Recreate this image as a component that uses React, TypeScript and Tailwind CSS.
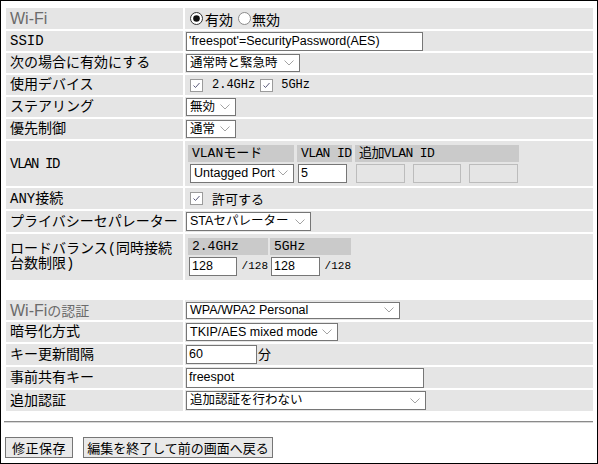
import React from "react";

const lbl = "font-['Liberation_Mono','Noto_Sans_CJK_JP',monospace] text-[14px] leading-none text-black";
const ui = "font-['Liberation_Sans','Noto_Sans_CJK_JP',sans-serif] text-[12.5px] leading-none text-black";

function Chevron() {
  return (
    <svg width="10" height="6" viewBox="0 0 10 6" className="shrink-0">
      <polyline points="0.5,0.5 5,5 9.5,0.5" fill="none" stroke="#a3a3a3" strokeWidth="1" />
    </svg>
  );
}

function Sel({ text, className }) {
  return (
    <div className={`flex items-center justify-between border border-[#767676] bg-white pl-[3px] pr-[5px] ${ui} ${className}`}>
      <span className="whitespace-nowrap">{text}</span>
      <Chevron />
    </div>
  );
}

function Inp({ text = "", className, disabled = false }) {
  return (
    <div
      className={`flex items-center pl-[2px] ${ui} ${
        disabled ? "border border-[#bcbcbc] bg-[#e5e5e5]" : "border border-[#767676] bg-white"
      } ${className}`}
    >
      <span className="whitespace-nowrap">{text}</span>
    </div>
  );
}

function Check() {
  return (
    <svg width="13" height="13" viewBox="0 0 13 13" className="shrink-0">
      <rect x="0.5" y="0.5" width="12" height="12" fill="#fff" stroke="#9b9b9b" />
      <polyline points="3.5,6.5 5.5,8.5 9.5,4" fill="none" stroke="#5a5a7a" strokeWidth="1" />
    </svg>
  );
}

function Radio({ on }) {
  return (
    <svg width="13" height="13" viewBox="0 0 13 13" className="shrink-0">
      <circle cx="6.5" cy="6.5" r="6" fill="#fff" stroke={on ? "#333" : "#8a8a8a"} />
      {on && <circle cx="6.5" cy="6.5" r="3.3" fill="#111" />}
    </svg>
  );
}

function Row({ label, h, children }) {
  return (
    <div className={`flex gap-[2px] ${h}`}>
      <div className="flex w-[177px] shrink-0 items-center bg-[#e5e5e5] pl-[4px]">{label}</div>
      <div className="flex flex-1 items-center bg-[#e5e5e5] pl-[1px]">{children}</div>
    </div>
  );
}

const head = "flex h-[17px] items-center bg-[#cacaca] pl-[4px] font-['Liberation_Mono','Noto_Sans_CJK_JP',monospace] text-[13px] leading-none";

export default function App() {
  return (
    <div className="flex h-[464px] w-[598px] flex-col border border-black bg-white pl-[3px] pr-[4px] pt-[7px]">
      <div className="ml-[2px] flex flex-col gap-[2px]">
        <Row
          h="h-[21px]"
          label={<span className="font-['Liberation_Sans',sans-serif] text-[16px] leading-none text-[#6b6b6b]">Wi-Fi</span>}
        >
          <div className="flex items-center pl-[4px] font-['Noto_Sans_CJK_JP',sans-serif] text-[14px] leading-none">
            <Radio on />
            <span className="ml-[2px]">有効</span>
            <span className="ml-[5px]"><Radio on={false} /></span>
            <span className="ml-[1px]">無効</span>
          </div>
        </Row>
        <Row h="h-[20px]" label={<span className={lbl}>SSID</span>}>
          <Inp text="'freespot'=SecurityPassword(AES)" className="h-[19px] w-[237px]" />
        </Row>
        <Row h="h-[20px]" label={<span className={lbl}>次の場合に有効にする</span>}>
          <Sel text="通常時と緊急時" className="h-[18px] w-[114px]" />
        </Row>
        <Row h="h-[20px]" label={<span className={lbl}>使用デバイス</span>}>
          <div className="flex items-center pl-[4px] font-['Liberation_Mono',monospace] text-[12px] leading-none">
            <Check />
            <span className="ml-[9px]">2.4GHz</span>
            <span className="ml-[5px]"><Check /></span>
            <span className="ml-[8px]">5GHz</span>
          </div>
        </Row>
        <Row h="h-[20px]" label={<span className={lbl}>ステアリング</span>}>
          <Sel text="無効" className="h-[18px] w-[50px]" />
        </Row>
        <Row h="h-[20px]" label={<span className={lbl}>優先制御</span>}>
          <Sel text="通常" className="h-[18px] w-[50px]" />
        </Row>
        <Row h="h-[45px]" label={<span className={`${lbl} tracking-[-1.4px]`}>VLAN ID</span>}>
          <div className="flex flex-col gap-[2px] pl-[2px]">
            <div className="flex gap-[3px]">
              <div className={`${head} w-[106px]`}>VLANモード</div>
              <div className={`${head} w-[55px] tracking-[-0.6px]`}>VLAN ID</div>
              <div className={`${head} w-[164px] pl-[2px] tracking-[-0.6px]`}>追加VLAN ID</div>
            </div>
            <div className="flex gap-[3px]">
              <div className="w-[106px] pl-[2px]">
                <Sel text="Untagged Port" className="h-[19px] w-[104px]" />
              </div>
              <div className="w-[55px] pl-[1px]">
                <Inp text="5" className="h-[19px] w-[49px]" />
              </div>
              <div className="flex w-[164px] gap-[8px] pl-[1px]">
                <Inp disabled className="h-[19px] w-[49px]" />
                <Inp disabled className="h-[19px] w-[48px]" />
                <Inp disabled className="h-[19px] w-[49px]" />
              </div>
            </div>
          </div>
        </Row>
        <Row h="h-[21px]" label={<span className={lbl}>ANY接続</span>}>
          <div className="flex items-center pl-[4px] font-['Noto_Sans_CJK_JP',sans-serif] text-[13px] leading-none">
            <Check />
            <span className="ml-[9px]">許可する</span>
          </div>
        </Row>
        <Row h="h-[21px]" label={<span className={lbl}>プライバシーセパレーター</span>}>
          <Sel text="STAセパレーター" className="h-[19px] w-[125px]" />
        </Row>
        <Row
          h="h-[46px]"
          label={
            <div className="font-['Liberation_Mono','Noto_Sans_CJK_JP',monospace] text-[14px] leading-[15px] text-black">
              <div>ロードバランス(同時接続</div>
              <div>台数制限)</div>
            </div>
          }
        >
          <div className="flex flex-col gap-[2px] pl-[2px]">
            <div className="flex gap-[2px]">
              <div className={`${head} w-[80px]`}>2.4GHz</div>
              <div className={`${head} w-[81px]`}>5GHz</div>
            </div>
            <div className="flex gap-[2px] font-['Liberation_Mono',monospace] text-[11px] leading-none">
              <div className="flex w-[80px] items-center pl-[1px]">
                <Inp text="128" className="h-[19px] w-[48px]" />
                <span className="ml-[5px]">/128</span>
              </div>
              <div className="flex w-[81px] items-center pl-[1px]">
                <Inp text="128" className="h-[19px] w-[49px]" />
                <span className="ml-[5px]">/128</span>
              </div>
            </div>
          </div>
        </Row>
      </div>

      <div className="ml-[2px] mt-[20px] flex flex-col gap-[2px]">
        <Row
          h="h-[20px]"
          label={
            <span className="text-[#6b6b6b]">
              <span className="font-['Liberation_Sans',sans-serif] text-[16px] leading-none">Wi-Fi</span>
              <span className="font-['Noto_Sans_CJK_JP',sans-serif] text-[14px] leading-none">の認証</span>
            </span>
          }
        >
          <Sel text="WPA/WPA2 Personal" className="h-[17px] w-[214px]" />
        </Row>
        <Row h="h-[20px]" label={<span className={lbl}>暗号化方式</span>}>
          <Sel text="TKIP/AES mixed mode" className="h-[18px] w-[152px]" />
        </Row>
        <Row h="h-[21px]" label={<span className={lbl}>キー更新間隔</span>}>
          <Inp text="60" className="h-[19px] w-[71px]" />
          <span className={`${ui} ml-[1px] text-[13px]`}>分</span>
        </Row>
        <Row h="h-[21px]" label={<span className={lbl}>事前共有キー</span>}>
          <Inp text="freespot" className="h-[20px] w-[238px]" />
        </Row>
        <Row h="h-[21px]" label={<span className={lbl}>追加認証</span>}>
          <Sel text="追加認証を行わない" className="h-[19px] w-[240px]" />
        </Row>
      </div>

      <div className="mt-[10px] border-t border-b border-t-[#8a8a8a] border-b-[#d8d8d8]" />

      <div className="ml-[1px] mt-[14px] flex gap-[10px]">
        <button className="flex h-[21px] w-[68px] items-center justify-center border border-[#767676] bg-[#e9e9e9] font-['Noto_Sans_CJK_JP',sans-serif] text-[13px] leading-none tracking-[0.5px]">
          修正保存
        </button>
        <button className="flex h-[21px] w-[190px] items-center justify-center border border-[#767676] bg-[#e9e9e9] font-['Noto_Sans_CJK_JP',sans-serif] text-[13px] leading-none">
          編集を終了して前の画面へ戻る
        </button>
      </div>
    </div>
  );
}
